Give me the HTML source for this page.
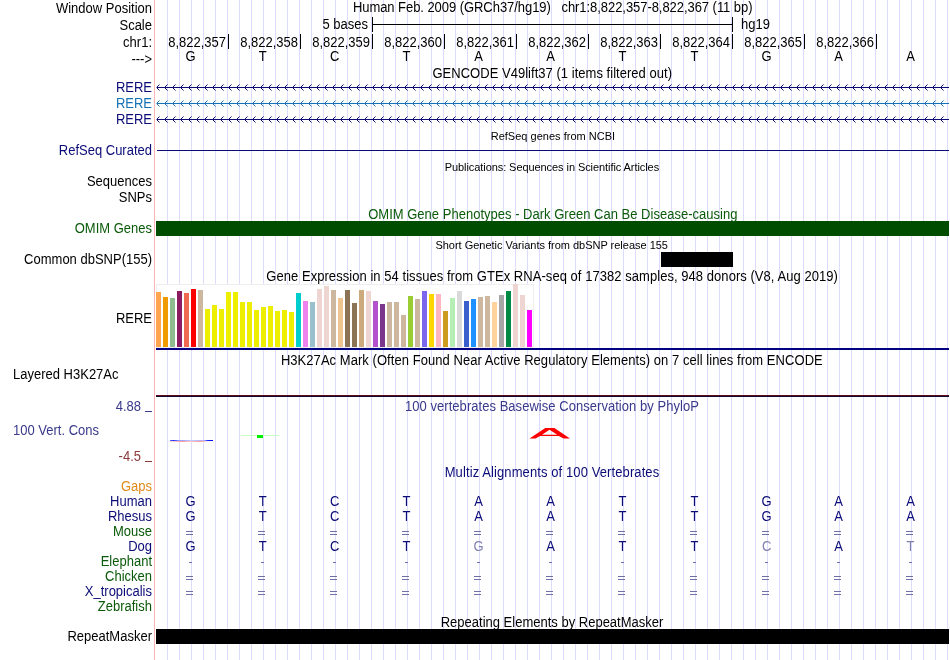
<!DOCTYPE html>
<html><head><meta charset="utf-8"><style>
html,body{margin:0;padding:0;background:#fff;}
#c{position:relative;width:950px;height:660px;overflow:hidden;background:#fff;}
svg{position:absolute;left:0;top:0;}
#tx{position:absolute;left:0;top:0;width:950px;height:660px;will-change:transform;}
.t{position:absolute;white-space:nowrap;font-family:"Liberation Sans",sans-serif;}
</style></head><body><div id="c">
<svg width="950" height="660" viewBox="0 0 950 660" shape-rendering="crispEdges">
<line x1="154.5" y1="0" x2="154.5" y2="660" stroke="#ffb4b4" stroke-width="1"/>
<line x1="167.5" y1="0" x2="167.5" y2="660" stroke="#dcdcff" stroke-width="1"/>
<line x1="179.5" y1="0" x2="179.5" y2="660" stroke="#dcdcff" stroke-width="1"/>
<line x1="191.5" y1="0" x2="191.5" y2="660" stroke="#dcdcff" stroke-width="1"/>
<line x1="203.5" y1="0" x2="203.5" y2="660" stroke="#dcdcff" stroke-width="1"/>
<line x1="215.5" y1="0" x2="215.5" y2="660" stroke="#dcdcff" stroke-width="1"/>
<line x1="227.5" y1="0" x2="227.5" y2="660" stroke="#dcdcff" stroke-width="1"/>
<line x1="239.5" y1="0" x2="239.5" y2="660" stroke="#dcdcff" stroke-width="1"/>
<line x1="251.5" y1="0" x2="251.5" y2="660" stroke="#dcdcff" stroke-width="1"/>
<line x1="263.5" y1="0" x2="263.5" y2="660" stroke="#dcdcff" stroke-width="1"/>
<line x1="275.5" y1="0" x2="275.5" y2="660" stroke="#dcdcff" stroke-width="1"/>
<line x1="287.5" y1="0" x2="287.5" y2="660" stroke="#dcdcff" stroke-width="1"/>
<line x1="299.5" y1="0" x2="299.5" y2="660" stroke="#dcdcff" stroke-width="1"/>
<line x1="311.5" y1="0" x2="311.5" y2="660" stroke="#dcdcff" stroke-width="1"/>
<line x1="323.5" y1="0" x2="323.5" y2="660" stroke="#dcdcff" stroke-width="1"/>
<line x1="335.5" y1="0" x2="335.5" y2="660" stroke="#dcdcff" stroke-width="1"/>
<line x1="347.5" y1="0" x2="347.5" y2="660" stroke="#dcdcff" stroke-width="1"/>
<line x1="359.5" y1="0" x2="359.5" y2="660" stroke="#dcdcff" stroke-width="1"/>
<line x1="371.5" y1="0" x2="371.5" y2="660" stroke="#dcdcff" stroke-width="1"/>
<line x1="383.5" y1="0" x2="383.5" y2="660" stroke="#dcdcff" stroke-width="1"/>
<line x1="395.5" y1="0" x2="395.5" y2="660" stroke="#dcdcff" stroke-width="1"/>
<line x1="407.5" y1="0" x2="407.5" y2="660" stroke="#dcdcff" stroke-width="1"/>
<line x1="419.5" y1="0" x2="419.5" y2="660" stroke="#dcdcff" stroke-width="1"/>
<line x1="431.5" y1="0" x2="431.5" y2="660" stroke="#dcdcff" stroke-width="1"/>
<line x1="443.5" y1="0" x2="443.5" y2="660" stroke="#dcdcff" stroke-width="1"/>
<line x1="455.5" y1="0" x2="455.5" y2="660" stroke="#dcdcff" stroke-width="1"/>
<line x1="467.5" y1="0" x2="467.5" y2="660" stroke="#dcdcff" stroke-width="1"/>
<line x1="479.5" y1="0" x2="479.5" y2="660" stroke="#dcdcff" stroke-width="1"/>
<line x1="491.5" y1="0" x2="491.5" y2="660" stroke="#dcdcff" stroke-width="1"/>
<line x1="503.5" y1="0" x2="503.5" y2="660" stroke="#dcdcff" stroke-width="1"/>
<line x1="515.5" y1="0" x2="515.5" y2="660" stroke="#dcdcff" stroke-width="1"/>
<line x1="527.5" y1="0" x2="527.5" y2="660" stroke="#dcdcff" stroke-width="1"/>
<line x1="539.5" y1="0" x2="539.5" y2="660" stroke="#dcdcff" stroke-width="1"/>
<line x1="551.5" y1="0" x2="551.5" y2="660" stroke="#dcdcff" stroke-width="1"/>
<line x1="563.5" y1="0" x2="563.5" y2="660" stroke="#dcdcff" stroke-width="1"/>
<line x1="575.5" y1="0" x2="575.5" y2="660" stroke="#dcdcff" stroke-width="1"/>
<line x1="587.5" y1="0" x2="587.5" y2="660" stroke="#dcdcff" stroke-width="1"/>
<line x1="599.5" y1="0" x2="599.5" y2="660" stroke="#dcdcff" stroke-width="1"/>
<line x1="611.5" y1="0" x2="611.5" y2="660" stroke="#dcdcff" stroke-width="1"/>
<line x1="623.5" y1="0" x2="623.5" y2="660" stroke="#dcdcff" stroke-width="1"/>
<line x1="635.5" y1="0" x2="635.5" y2="660" stroke="#dcdcff" stroke-width="1"/>
<line x1="647.5" y1="0" x2="647.5" y2="660" stroke="#dcdcff" stroke-width="1"/>
<line x1="659.5" y1="0" x2="659.5" y2="660" stroke="#dcdcff" stroke-width="1"/>
<line x1="671.5" y1="0" x2="671.5" y2="660" stroke="#dcdcff" stroke-width="1"/>
<line x1="683.5" y1="0" x2="683.5" y2="660" stroke="#dcdcff" stroke-width="1"/>
<line x1="695.5" y1="0" x2="695.5" y2="660" stroke="#dcdcff" stroke-width="1"/>
<line x1="707.5" y1="0" x2="707.5" y2="660" stroke="#dcdcff" stroke-width="1"/>
<line x1="719.5" y1="0" x2="719.5" y2="660" stroke="#dcdcff" stroke-width="1"/>
<line x1="731.5" y1="0" x2="731.5" y2="660" stroke="#dcdcff" stroke-width="1"/>
<line x1="743.5" y1="0" x2="743.5" y2="660" stroke="#dcdcff" stroke-width="1"/>
<line x1="755.5" y1="0" x2="755.5" y2="660" stroke="#dcdcff" stroke-width="1"/>
<line x1="767.5" y1="0" x2="767.5" y2="660" stroke="#dcdcff" stroke-width="1"/>
<line x1="779.5" y1="0" x2="779.5" y2="660" stroke="#dcdcff" stroke-width="1"/>
<line x1="791.5" y1="0" x2="791.5" y2="660" stroke="#dcdcff" stroke-width="1"/>
<line x1="803.5" y1="0" x2="803.5" y2="660" stroke="#dcdcff" stroke-width="1"/>
<line x1="815.5" y1="0" x2="815.5" y2="660" stroke="#dcdcff" stroke-width="1"/>
<line x1="827.5" y1="0" x2="827.5" y2="660" stroke="#dcdcff" stroke-width="1"/>
<line x1="839.5" y1="0" x2="839.5" y2="660" stroke="#dcdcff" stroke-width="1"/>
<line x1="851.5" y1="0" x2="851.5" y2="660" stroke="#dcdcff" stroke-width="1"/>
<line x1="863.5" y1="0" x2="863.5" y2="660" stroke="#dcdcff" stroke-width="1"/>
<line x1="875.5" y1="0" x2="875.5" y2="660" stroke="#dcdcff" stroke-width="1"/>
<line x1="887.5" y1="0" x2="887.5" y2="660" stroke="#dcdcff" stroke-width="1"/>
<line x1="899.5" y1="0" x2="899.5" y2="660" stroke="#dcdcff" stroke-width="1"/>
<line x1="911.5" y1="0" x2="911.5" y2="660" stroke="#dcdcff" stroke-width="1"/>
<line x1="923.5" y1="0" x2="923.5" y2="660" stroke="#dcdcff" stroke-width="1"/>
<line x1="935.5" y1="0" x2="935.5" y2="660" stroke="#dcdcff" stroke-width="1"/>
<line x1="947.5" y1="0" x2="947.5" y2="660" stroke="#dcdcff" stroke-width="1"/>
<rect x="145" y="411" width="7" height="1" fill="#3a3a8c"/>
<rect x="145" y="461" width="7" height="1" fill="#8c3a3a"/>
<line x1="372.5" y1="17" x2="372.5" y2="32" stroke="#000"/>
<line x1="732.5" y1="17" x2="732.5" y2="32" stroke="#000"/>
<line x1="372" y1="24.5" x2="733" y2="24.5" stroke="#000"/>
<line x1="228.5" y1="34" x2="228.5" y2="49" stroke="#000"/>
<line x1="300.5" y1="34" x2="300.5" y2="49" stroke="#000"/>
<line x1="372.5" y1="34" x2="372.5" y2="49" stroke="#000"/>
<line x1="444.5" y1="34" x2="444.5" y2="49" stroke="#000"/>
<line x1="516.5" y1="34" x2="516.5" y2="49" stroke="#000"/>
<line x1="588.5" y1="34" x2="588.5" y2="49" stroke="#000"/>
<line x1="660.5" y1="34" x2="660.5" y2="49" stroke="#000"/>
<line x1="732.5" y1="34" x2="732.5" y2="49" stroke="#000"/>
<line x1="804.5" y1="34" x2="804.5" y2="49" stroke="#000"/>
<line x1="876.5" y1="34" x2="876.5" y2="49" stroke="#000"/>
<pattern id="chev0" patternUnits="userSpaceOnUse" x="156" y="84" width="8" height="7"><rect x="0" y="3" width="1" height="1" fill="#0c0c78" fill-opacity="0.5"/><rect x="1" y="2" width="1" height="3" fill="#0c0c78"/><rect x="2" y="1" width="1" height="1" fill="#0c0c78"/><rect x="2" y="5" width="1" height="1" fill="#0c0c78"/><rect x="3" y="0" width="1" height="1" fill="#0c0c78" fill-opacity="0.5"/><rect x="3" y="6" width="1" height="1" fill="#0c0c78" fill-opacity="0.5"/></pattern>
<rect x="156" y="84" width="793" height="7" fill="url(#chev0)"/>
<rect x="157" y="87" width="792" height="1" fill="#0c0c78"/>
<pattern id="chev1" patternUnits="userSpaceOnUse" x="156" y="100" width="8" height="7"><rect x="0" y="3" width="1" height="1" fill="#1672b6" fill-opacity="0.5"/><rect x="1" y="2" width="1" height="3" fill="#1672b6"/><rect x="2" y="1" width="1" height="1" fill="#1672b6"/><rect x="2" y="5" width="1" height="1" fill="#1672b6"/><rect x="3" y="0" width="1" height="1" fill="#1672b6" fill-opacity="0.5"/><rect x="3" y="6" width="1" height="1" fill="#1672b6" fill-opacity="0.5"/></pattern>
<rect x="156" y="100" width="793" height="7" fill="url(#chev1)"/>
<rect x="157" y="103" width="792" height="1" fill="#1672b6"/>
<pattern id="chev2" patternUnits="userSpaceOnUse" x="156" y="116" width="8" height="7"><rect x="0" y="3" width="1" height="1" fill="#0c0c78" fill-opacity="0.5"/><rect x="1" y="2" width="1" height="3" fill="#0c0c78"/><rect x="2" y="1" width="1" height="1" fill="#0c0c78"/><rect x="2" y="5" width="1" height="1" fill="#0c0c78"/><rect x="3" y="0" width="1" height="1" fill="#0c0c78" fill-opacity="0.5"/><rect x="3" y="6" width="1" height="1" fill="#0c0c78" fill-opacity="0.5"/></pattern>
<rect x="156" y="116" width="793" height="7" fill="url(#chev2)"/>
<rect x="157" y="119" width="792" height="1" fill="#0c0c78"/>
<rect x="157" y="150" width="792" height="1" fill="#0c0c78"/>
<rect x="156" y="221" width="793" height="15" fill="#004d00"/>
<rect x="661" y="252" width="72" height="15" fill="#000"/>
<rect x="156.5" y="284.5" width="377" height="63" fill="#fff" stroke="#eeeeee"/>
<rect x="156" y="292" width="5" height="55" fill="#FFA54F"/>
<rect x="163" y="297" width="5" height="50" fill="#EE9A00"/>
<rect x="170" y="298" width="5" height="49" fill="#8FBC8F"/>
<rect x="177" y="291" width="5" height="56" fill="#8B1C62"/>
<rect x="184" y="293" width="5" height="54" fill="#EE6A50"/>
<rect x="191" y="289" width="5" height="58" fill="#FF0000"/>
<rect x="198" y="290" width="5" height="57" fill="#CDB79E"/>
<rect x="205" y="309" width="5" height="38" fill="#EEEE00"/>
<rect x="212" y="305" width="5" height="42" fill="#EEEE00"/>
<rect x="219" y="309" width="5" height="38" fill="#EEEE00"/>
<rect x="226" y="292" width="5" height="55" fill="#EEEE00"/>
<rect x="233" y="292" width="5" height="55" fill="#EEEE00"/>
<rect x="240" y="302" width="5" height="45" fill="#EEEE00"/>
<rect x="247" y="302" width="5" height="45" fill="#EEEE00"/>
<rect x="254" y="310" width="5" height="37" fill="#EEEE00"/>
<rect x="261" y="307" width="5" height="40" fill="#EEEE00"/>
<rect x="268" y="306" width="5" height="41" fill="#EEEE00"/>
<rect x="275" y="311" width="5" height="36" fill="#EEEE00"/>
<rect x="282" y="310" width="5" height="37" fill="#EEEE00"/>
<rect x="289" y="312" width="5" height="35" fill="#EEEE00"/>
<rect x="296" y="293" width="5" height="54" fill="#00CDCD"/>
<rect x="303" y="301" width="5" height="46" fill="#EE82EE"/>
<rect x="310" y="302" width="5" height="45" fill="#9AC0CD"/>
<rect x="317" y="289" width="5" height="58" fill="#EED5D2"/>
<rect x="324" y="286" width="5" height="61" fill="#EED5D2"/>
<rect x="331" y="290" width="5" height="57" fill="#CDB79E"/>
<rect x="338" y="298" width="5" height="49" fill="#EEC591"/>
<rect x="345" y="290" width="5" height="57" fill="#8B7355"/>
<rect x="352" y="303" width="5" height="44" fill="#8B7355"/>
<rect x="359" y="290" width="5" height="57" fill="#CDAA7D"/>
<rect x="366" y="291" width="5" height="56" fill="#EED5D2"/>
<rect x="373" y="301" width="5" height="46" fill="#B452CD"/>
<rect x="380" y="304" width="5" height="43" fill="#7A378B"/>
<rect x="387" y="302" width="5" height="45" fill="#CDB79E"/>
<rect x="394" y="302" width="5" height="45" fill="#CDB79E"/>
<rect x="401" y="315" width="5" height="32" fill="#CDB79E"/>
<rect x="408" y="296" width="5" height="51" fill="#9ACD32"/>
<rect x="415" y="299" width="5" height="48" fill="#CDB79E"/>
<rect x="422" y="291" width="5" height="56" fill="#7A67EE"/>
<rect x="429" y="294" width="5" height="53" fill="#FFD700"/>
<rect x="436" y="294" width="5" height="53" fill="#FFB6C1"/>
<rect x="443" y="311" width="5" height="36" fill="#CD9B1D"/>
<rect x="450" y="298" width="5" height="49" fill="#B4EEB4"/>
<rect x="457" y="291" width="5" height="56" fill="#D9D9D9"/>
<rect x="464" y="301" width="5" height="46" fill="#3A5FCD"/>
<rect x="471" y="299" width="5" height="48" fill="#1E90FF"/>
<rect x="478" y="297" width="5" height="50" fill="#CDB79E"/>
<rect x="485" y="296" width="5" height="51" fill="#CDB79E"/>
<rect x="492" y="302" width="5" height="45" fill="#FFD39B"/>
<rect x="499" y="295" width="5" height="52" fill="#A6A6A6"/>
<rect x="506" y="291" width="5" height="56" fill="#008B45"/>
<rect x="513" y="284" width="5" height="63" fill="#EED5D2"/>
<rect x="520" y="295" width="5" height="52" fill="#EED5D2"/>
<rect x="527" y="310" width="5" height="37" fill="#FF00FF"/>
<rect x="156" y="348" width="793" height="2" fill="#000080"/>
<rect x="156" y="395" width="793" height="1" fill="#5c0c1c"/>
<rect x="156" y="396" width="793" height="1" fill="#120a2c"/>
<defs><linearGradient id="gb" x1="0" x2="1" y1="0" y2="0"><stop offset="0" stop-color="#6070ff"/><stop offset="0.08" stop-color="#2030ff"/><stop offset="0.2" stop-color="#9098ff"/><stop offset="0.5" stop-color="#c4c8ff"/><stop offset="0.8" stop-color="#a8b0ff"/><stop offset="0.88" stop-color="#1020ff"/><stop offset="1" stop-color="#0000ff"/></linearGradient><linearGradient id="gr" x1="0" x2="1" y1="0" y2="0"><stop offset="0" stop-color="#ffe8e8"/><stop offset="0.35" stop-color="#ff9a9a"/><stop offset="0.55" stop-color="#ffc8c8"/><stop offset="0.8" stop-color="#ff9a9a"/><stop offset="1" stop-color="#fff0f0"/></linearGradient></defs>
<rect x="170" y="440" width="43" height="1" fill="url(#gb)"/>
<rect x="169" y="441" width="39" height="1" fill="url(#gr)"/>
<rect x="241" y="435" width="38" height="1" fill="#c8ffc8"/>
<rect x="257" y="435" width="6" height="3" fill="#00ee00"/>
<path shape-rendering="geometricPrecision" fill-rule="evenodd" fill="#ff0000" d="M529.5,438.6 L545.3,428 L554.4,428 L570,438.6 L563.6,438.6 L558.8,435.9 L540,435.9 L535.5,438.6 Z M549.5,429.8 L542,434.8 L557.3,434.8 Z"/>
<rect x="186" y="531" width="7" height="1" fill="#7070a8"/>
<rect x="186" y="534" width="7" height="1" fill="#7070a8"/>
<rect x="186" y="576" width="7" height="1" fill="#7070a8"/>
<rect x="186" y="579" width="7" height="1" fill="#7070a8"/>
<rect x="186" y="591" width="7" height="1" fill="#7070a8"/>
<rect x="186" y="594" width="7" height="1" fill="#7070a8"/>
<rect x="189" y="562" width="3" height="1" fill="#7070a8"/>
<rect x="258" y="531" width="7" height="1" fill="#7070a8"/>
<rect x="258" y="534" width="7" height="1" fill="#7070a8"/>
<rect x="258" y="576" width="7" height="1" fill="#7070a8"/>
<rect x="258" y="579" width="7" height="1" fill="#7070a8"/>
<rect x="258" y="591" width="7" height="1" fill="#7070a8"/>
<rect x="258" y="594" width="7" height="1" fill="#7070a8"/>
<rect x="261" y="562" width="3" height="1" fill="#7070a8"/>
<rect x="330" y="531" width="7" height="1" fill="#7070a8"/>
<rect x="330" y="534" width="7" height="1" fill="#7070a8"/>
<rect x="330" y="576" width="7" height="1" fill="#7070a8"/>
<rect x="330" y="579" width="7" height="1" fill="#7070a8"/>
<rect x="330" y="591" width="7" height="1" fill="#7070a8"/>
<rect x="330" y="594" width="7" height="1" fill="#7070a8"/>
<rect x="333" y="562" width="3" height="1" fill="#7070a8"/>
<rect x="402" y="531" width="7" height="1" fill="#7070a8"/>
<rect x="402" y="534" width="7" height="1" fill="#7070a8"/>
<rect x="402" y="576" width="7" height="1" fill="#7070a8"/>
<rect x="402" y="579" width="7" height="1" fill="#7070a8"/>
<rect x="402" y="591" width="7" height="1" fill="#7070a8"/>
<rect x="402" y="594" width="7" height="1" fill="#7070a8"/>
<rect x="405" y="562" width="3" height="1" fill="#7070a8"/>
<rect x="474" y="531" width="7" height="1" fill="#7070a8"/>
<rect x="474" y="534" width="7" height="1" fill="#7070a8"/>
<rect x="474" y="576" width="7" height="1" fill="#7070a8"/>
<rect x="474" y="579" width="7" height="1" fill="#7070a8"/>
<rect x="474" y="591" width="7" height="1" fill="#7070a8"/>
<rect x="474" y="594" width="7" height="1" fill="#7070a8"/>
<rect x="477" y="562" width="3" height="1" fill="#7070a8"/>
<rect x="546" y="531" width="7" height="1" fill="#7070a8"/>
<rect x="546" y="534" width="7" height="1" fill="#7070a8"/>
<rect x="546" y="576" width="7" height="1" fill="#7070a8"/>
<rect x="546" y="579" width="7" height="1" fill="#7070a8"/>
<rect x="546" y="591" width="7" height="1" fill="#7070a8"/>
<rect x="546" y="594" width="7" height="1" fill="#7070a8"/>
<rect x="549" y="562" width="3" height="1" fill="#7070a8"/>
<rect x="618" y="531" width="7" height="1" fill="#7070a8"/>
<rect x="618" y="534" width="7" height="1" fill="#7070a8"/>
<rect x="618" y="576" width="7" height="1" fill="#7070a8"/>
<rect x="618" y="579" width="7" height="1" fill="#7070a8"/>
<rect x="618" y="591" width="7" height="1" fill="#7070a8"/>
<rect x="618" y="594" width="7" height="1" fill="#7070a8"/>
<rect x="621" y="562" width="3" height="1" fill="#7070a8"/>
<rect x="690" y="531" width="7" height="1" fill="#7070a8"/>
<rect x="690" y="534" width="7" height="1" fill="#7070a8"/>
<rect x="690" y="576" width="7" height="1" fill="#7070a8"/>
<rect x="690" y="579" width="7" height="1" fill="#7070a8"/>
<rect x="690" y="591" width="7" height="1" fill="#7070a8"/>
<rect x="690" y="594" width="7" height="1" fill="#7070a8"/>
<rect x="693" y="562" width="3" height="1" fill="#7070a8"/>
<rect x="762" y="531" width="7" height="1" fill="#7070a8"/>
<rect x="762" y="534" width="7" height="1" fill="#7070a8"/>
<rect x="762" y="576" width="7" height="1" fill="#7070a8"/>
<rect x="762" y="579" width="7" height="1" fill="#7070a8"/>
<rect x="762" y="591" width="7" height="1" fill="#7070a8"/>
<rect x="762" y="594" width="7" height="1" fill="#7070a8"/>
<rect x="765" y="562" width="3" height="1" fill="#7070a8"/>
<rect x="834" y="531" width="7" height="1" fill="#7070a8"/>
<rect x="834" y="534" width="7" height="1" fill="#7070a8"/>
<rect x="834" y="576" width="7" height="1" fill="#7070a8"/>
<rect x="834" y="579" width="7" height="1" fill="#7070a8"/>
<rect x="834" y="591" width="7" height="1" fill="#7070a8"/>
<rect x="834" y="594" width="7" height="1" fill="#7070a8"/>
<rect x="837" y="562" width="3" height="1" fill="#7070a8"/>
<rect x="906" y="531" width="7" height="1" fill="#7070a8"/>
<rect x="906" y="534" width="7" height="1" fill="#7070a8"/>
<rect x="906" y="576" width="7" height="1" fill="#7070a8"/>
<rect x="906" y="579" width="7" height="1" fill="#7070a8"/>
<rect x="906" y="591" width="7" height="1" fill="#7070a8"/>
<rect x="906" y="594" width="7" height="1" fill="#7070a8"/>
<rect x="909" y="562" width="3" height="1" fill="#7070a8"/>
<rect x="156" y="629" width="793" height="15" fill="#000"/>
</svg>
<div id="tx">
<div class="t" style="right:798px;text-align:right;top:2px;font-size:13px;line-height:13px;color:#000;transform:scaleY(1.1);transform-origin:0 11px;">Window Position</div>
<div class="t" style="right:798px;text-align:right;top:19px;font-size:13px;line-height:13px;color:#000;transform:scaleY(1.1);transform-origin:0 11px;">Scale</div>
<div class="t" style="right:798px;text-align:right;top:36px;font-size:13px;line-height:13px;color:#000;transform:scaleY(1.1);transform-origin:0 11px;">chr1:</div>
<div class="t" style="right:798px;text-align:right;top:53px;font-size:13px;line-height:13px;color:#000;transform:scaleY(1.1);transform-origin:0 11px;">---&gt;</div>
<div class="t" style="right:798px;text-align:right;top:81px;font-size:13px;line-height:13px;color:#0c0c78;transform:scaleY(1.1);transform-origin:0 11px;">RERE</div>
<div class="t" style="right:798px;text-align:right;top:97px;font-size:13px;line-height:13px;color:#1672b6;transform:scaleY(1.1);transform-origin:0 11px;">RERE</div>
<div class="t" style="right:798px;text-align:right;top:113px;font-size:13px;line-height:13px;color:#0c0c78;transform:scaleY(1.1);transform-origin:0 11px;">RERE</div>
<div class="t" style="right:798px;text-align:right;top:144px;font-size:13px;line-height:13px;color:#0c0c78;transform:scaleY(1.1);transform-origin:0 11px;">RefSeq Curated</div>
<div class="t" style="right:798px;text-align:right;top:175px;font-size:13px;line-height:13px;color:#000;transform:scaleY(1.1);transform-origin:0 11px;">Sequences</div>
<div class="t" style="right:798px;text-align:right;top:191px;font-size:13px;line-height:13px;color:#000;transform:scaleY(1.1);transform-origin:0 11px;">SNPs</div>
<div class="t" style="right:798px;text-align:right;top:222px;font-size:13px;line-height:13px;color:#0a5a0a;transform:scaleY(1.1);transform-origin:0 11px;">OMIM Genes</div>
<div class="t" style="right:798px;text-align:right;top:253px;font-size:13px;line-height:13px;color:#000;transform:scaleY(1.1);transform-origin:0 11px;">Common dbSNP(155)</div>
<div class="t" style="right:798px;text-align:right;top:312px;font-size:13px;line-height:13px;color:#000;transform:scaleY(1.1);transform-origin:0 11px;">RERE</div>
<div class="t" style="left:13px;top:368px;font-size:13px;line-height:13px;color:#000;transform:scaleY(1.1);transform-origin:0 11px;">Layered H3K27Ac</div>
<div class="t" style="right:809px;text-align:right;top:400px;font-size:13px;line-height:13px;color:#3a3a8c;transform:scaleY(1.1);transform-origin:0 11px;">4.88</div>
<div class="t" style="left:13px;top:424px;font-size:13px;line-height:13px;color:#3a3a8c;transform:scaleY(1.1);transform-origin:0 11px;">100 Vert. Cons</div>
<div class="t" style="right:809px;text-align:right;top:450px;font-size:13px;line-height:13px;color:#8c3a3a;transform:scaleY(1.1);transform-origin:0 11px;">-4.5</div>
<div class="t" style="right:798px;text-align:right;top:480px;font-size:13px;line-height:13px;color:#e08a1a;transform:scaleY(1.1);transform-origin:0 11px;">Gaps</div>
<div class="t" style="right:798px;text-align:right;top:495px;font-size:13px;line-height:13px;color:#0c0c78;transform:scaleY(1.1);transform-origin:0 11px;">Human</div>
<div class="t" style="right:798px;text-align:right;top:510px;font-size:13px;line-height:13px;color:#0c0c78;transform:scaleY(1.1);transform-origin:0 11px;">Rhesus</div>
<div class="t" style="right:798px;text-align:right;top:525px;font-size:13px;line-height:13px;color:#0a5a0a;transform:scaleY(1.1);transform-origin:0 11px;">Mouse</div>
<div class="t" style="right:798px;text-align:right;top:540px;font-size:13px;line-height:13px;color:#0c0c78;transform:scaleY(1.1);transform-origin:0 11px;">Dog</div>
<div class="t" style="right:798px;text-align:right;top:555px;font-size:13px;line-height:13px;color:#0a5a0a;transform:scaleY(1.1);transform-origin:0 11px;">Elephant</div>
<div class="t" style="right:798px;text-align:right;top:570px;font-size:13px;line-height:13px;color:#0a5a0a;transform:scaleY(1.1);transform-origin:0 11px;">Chicken</div>
<div class="t" style="right:798px;text-align:right;top:585px;font-size:13px;line-height:13px;color:#0c0c78;transform:scaleY(1.1);transform-origin:0 11px;">X_tropicalis</div>
<div class="t" style="right:798px;text-align:right;top:600px;font-size:13px;line-height:13px;color:#0a5a0a;transform:scaleY(1.1);transform-origin:0 11px;">Zebrafish</div>
<div class="t" style="right:798px;text-align:right;top:630px;font-size:13px;line-height:13px;color:#000;transform:scaleY(1.1);transform-origin:0 11px;">RepeatMasker</div>
<div class="t" style="left:352.9px;top:1px;font-size:13px;line-height:13px;color:#000;letter-spacing:-0.054px;transform:scaleY(1.1);transform-origin:0 11px;">Human Feb. 2009 (GRCh37/hg19)&nbsp;&nbsp;&nbsp;chr1:8,822,357-8,822,367 (11 bp)</div>
<div class="t" style="right:582px;text-align:right;top:18px;font-size:13px;line-height:13px;color:#000;transform:scaleY(1.1);transform-origin:0 11px;">5 bases</div>
<div class="t" style="left:741px;top:18px;font-size:13px;line-height:13px;color:#000;transform:scaleY(1.1);transform-origin:0 11px;">hg19</div>
<div class="t" style="right:724px;text-align:right;top:36px;font-size:13px;line-height:13px;color:#000;transform:scaleY(1.1);transform-origin:0 11px;">8,822,357</div>
<div class="t" style="left:-209.4px;width:800px;text-align:center;top:50px;font-size:13px;line-height:13px;color:#000;transform:scaleY(1.1);transform-origin:0 11px;">G</div>
<div class="t" style="right:652px;text-align:right;top:36px;font-size:13px;line-height:13px;color:#000;transform:scaleY(1.1);transform-origin:0 11px;">8,822,358</div>
<div class="t" style="left:-137.39999999999998px;width:800px;text-align:center;top:50px;font-size:13px;line-height:13px;color:#000;transform:scaleY(1.1);transform-origin:0 11px;">T</div>
<div class="t" style="right:580px;text-align:right;top:36px;font-size:13px;line-height:13px;color:#000;transform:scaleY(1.1);transform-origin:0 11px;">8,822,359</div>
<div class="t" style="left:-65.39999999999998px;width:800px;text-align:center;top:50px;font-size:13px;line-height:13px;color:#000;transform:scaleY(1.1);transform-origin:0 11px;">C</div>
<div class="t" style="right:508px;text-align:right;top:36px;font-size:13px;line-height:13px;color:#000;transform:scaleY(1.1);transform-origin:0 11px;">8,822,360</div>
<div class="t" style="left:6.600000000000023px;width:800px;text-align:center;top:50px;font-size:13px;line-height:13px;color:#000;transform:scaleY(1.1);transform-origin:0 11px;">T</div>
<div class="t" style="right:436px;text-align:right;top:36px;font-size:13px;line-height:13px;color:#000;transform:scaleY(1.1);transform-origin:0 11px;">8,822,361</div>
<div class="t" style="left:78.60000000000002px;width:800px;text-align:center;top:50px;font-size:13px;line-height:13px;color:#000;transform:scaleY(1.1);transform-origin:0 11px;">A</div>
<div class="t" style="right:364px;text-align:right;top:36px;font-size:13px;line-height:13px;color:#000;transform:scaleY(1.1);transform-origin:0 11px;">8,822,362</div>
<div class="t" style="left:150.60000000000002px;width:800px;text-align:center;top:50px;font-size:13px;line-height:13px;color:#000;transform:scaleY(1.1);transform-origin:0 11px;">A</div>
<div class="t" style="right:292px;text-align:right;top:36px;font-size:13px;line-height:13px;color:#000;transform:scaleY(1.1);transform-origin:0 11px;">8,822,363</div>
<div class="t" style="left:222.60000000000002px;width:800px;text-align:center;top:50px;font-size:13px;line-height:13px;color:#000;transform:scaleY(1.1);transform-origin:0 11px;">T</div>
<div class="t" style="right:220px;text-align:right;top:36px;font-size:13px;line-height:13px;color:#000;transform:scaleY(1.1);transform-origin:0 11px;">8,822,364</div>
<div class="t" style="left:294.6px;width:800px;text-align:center;top:50px;font-size:13px;line-height:13px;color:#000;transform:scaleY(1.1);transform-origin:0 11px;">T</div>
<div class="t" style="right:148px;text-align:right;top:36px;font-size:13px;line-height:13px;color:#000;transform:scaleY(1.1);transform-origin:0 11px;">8,822,365</div>
<div class="t" style="left:366.6px;width:800px;text-align:center;top:50px;font-size:13px;line-height:13px;color:#000;transform:scaleY(1.1);transform-origin:0 11px;">G</div>
<div class="t" style="right:76px;text-align:right;top:36px;font-size:13px;line-height:13px;color:#000;transform:scaleY(1.1);transform-origin:0 11px;">8,822,366</div>
<div class="t" style="left:438.6px;width:800px;text-align:center;top:50px;font-size:13px;line-height:13px;color:#000;transform:scaleY(1.1);transform-origin:0 11px;">A</div>
<div class="t" style="left:510.6px;width:800px;text-align:center;top:50px;font-size:13px;line-height:13px;color:#000;transform:scaleY(1.1);transform-origin:0 11px;">A</div>
<div class="t" style="left:432.4px;top:67px;font-size:13px;line-height:13px;color:#000;letter-spacing:0.0308px;transform:scaleY(1.1);transform-origin:0 11px;">GENCODE V49lift37 (1 items filtered out)</div>
<div class="t" style="left:490.7px;top:131px;font-size:11px;line-height:11px;color:#000;letter-spacing:0.0143px;">RefSeq genes from NCBI</div>
<div class="t" style="left:444.7px;top:162px;font-size:11px;line-height:11px;color:#000;letter-spacing:-0.0711px;">Publications: Sequences in Scientific Articles</div>
<div class="t" style="left:368.2px;top:208px;font-size:13px;line-height:13px;color:#0a5a0a;letter-spacing:0.0127px;transform:scaleY(1.1);transform-origin:0 11px;">OMIM Gene Phenotypes - Dark Green Can Be Disease-causing</div>
<div class="t" style="left:435.4px;top:240px;font-size:11px;line-height:11px;color:#000;letter-spacing:-0.0136px;">Short Genetic Variants from dbSNP release 155</div>
<div class="t" style="left:266.3px;top:270px;font-size:13px;line-height:13px;color:#000;letter-spacing:0.0478px;transform:scaleY(1.1);transform-origin:0 11px;">Gene Expression in 54 tissues from GTEx RNA-seq of 17382 samples, 948 donors (V8, Aug 2019)</div>
<div class="t" style="left:280.9px;top:354px;font-size:13px;line-height:13px;color:#000;letter-spacing:0.0506px;transform:scaleY(1.1);transform-origin:0 11px;">H3K27Ac Mark (Often Found Near Active Regulatory Elements) on 7 cell lines from ENCODE</div>
<div class="t" style="left:405.05px;top:400px;font-size:13px;line-height:13px;color:#3a3a8c;letter-spacing:0.0402px;transform:scaleY(1.1);transform-origin:0 11px;">100 vertebrates Basewise Conservation by PhyloP</div>
<div class="t" style="left:444.7px;top:466px;font-size:13px;line-height:13px;color:#0c0c78;letter-spacing:0.1px;transform:scaleY(1.1);transform-origin:0 11px;">Multiz Alignments of 100 Vertebrates</div>
<div class="t" style="left:-209.4px;width:800px;text-align:center;top:495px;font-size:13px;line-height:13px;color:#0c0c78;transform:scaleY(1.1);transform-origin:0 11px;">G</div>
<div class="t" style="left:-209.4px;width:800px;text-align:center;top:510px;font-size:13px;line-height:13px;color:#0c0c78;transform:scaleY(1.1);transform-origin:0 11px;">G</div>
<div class="t" style="left:-209.4px;width:800px;text-align:center;top:540px;font-size:13px;line-height:13px;color:#0c0c78;transform:scaleY(1.1);transform-origin:0 11px;">G</div>
<div class="t" style="left:-137.39999999999998px;width:800px;text-align:center;top:495px;font-size:13px;line-height:13px;color:#0c0c78;transform:scaleY(1.1);transform-origin:0 11px;">T</div>
<div class="t" style="left:-137.39999999999998px;width:800px;text-align:center;top:510px;font-size:13px;line-height:13px;color:#0c0c78;transform:scaleY(1.1);transform-origin:0 11px;">T</div>
<div class="t" style="left:-137.39999999999998px;width:800px;text-align:center;top:540px;font-size:13px;line-height:13px;color:#0c0c78;transform:scaleY(1.1);transform-origin:0 11px;">T</div>
<div class="t" style="left:-65.39999999999998px;width:800px;text-align:center;top:495px;font-size:13px;line-height:13px;color:#0c0c78;transform:scaleY(1.1);transform-origin:0 11px;">C</div>
<div class="t" style="left:-65.39999999999998px;width:800px;text-align:center;top:510px;font-size:13px;line-height:13px;color:#0c0c78;transform:scaleY(1.1);transform-origin:0 11px;">C</div>
<div class="t" style="left:-65.39999999999998px;width:800px;text-align:center;top:540px;font-size:13px;line-height:13px;color:#0c0c78;transform:scaleY(1.1);transform-origin:0 11px;">C</div>
<div class="t" style="left:6.600000000000023px;width:800px;text-align:center;top:495px;font-size:13px;line-height:13px;color:#0c0c78;transform:scaleY(1.1);transform-origin:0 11px;">T</div>
<div class="t" style="left:6.600000000000023px;width:800px;text-align:center;top:510px;font-size:13px;line-height:13px;color:#0c0c78;transform:scaleY(1.1);transform-origin:0 11px;">T</div>
<div class="t" style="left:6.600000000000023px;width:800px;text-align:center;top:540px;font-size:13px;line-height:13px;color:#0c0c78;transform:scaleY(1.1);transform-origin:0 11px;">T</div>
<div class="t" style="left:78.60000000000002px;width:800px;text-align:center;top:495px;font-size:13px;line-height:13px;color:#0c0c78;transform:scaleY(1.1);transform-origin:0 11px;">A</div>
<div class="t" style="left:78.60000000000002px;width:800px;text-align:center;top:510px;font-size:13px;line-height:13px;color:#0c0c78;transform:scaleY(1.1);transform-origin:0 11px;">A</div>
<div class="t" style="left:78.60000000000002px;width:800px;text-align:center;top:540px;font-size:13px;line-height:13px;color:#8080b0;transform:scaleY(1.1);transform-origin:0 11px;">G</div>
<div class="t" style="left:150.60000000000002px;width:800px;text-align:center;top:495px;font-size:13px;line-height:13px;color:#0c0c78;transform:scaleY(1.1);transform-origin:0 11px;">A</div>
<div class="t" style="left:150.60000000000002px;width:800px;text-align:center;top:510px;font-size:13px;line-height:13px;color:#0c0c78;transform:scaleY(1.1);transform-origin:0 11px;">A</div>
<div class="t" style="left:150.60000000000002px;width:800px;text-align:center;top:540px;font-size:13px;line-height:13px;color:#0c0c78;transform:scaleY(1.1);transform-origin:0 11px;">A</div>
<div class="t" style="left:222.60000000000002px;width:800px;text-align:center;top:495px;font-size:13px;line-height:13px;color:#0c0c78;transform:scaleY(1.1);transform-origin:0 11px;">T</div>
<div class="t" style="left:222.60000000000002px;width:800px;text-align:center;top:510px;font-size:13px;line-height:13px;color:#0c0c78;transform:scaleY(1.1);transform-origin:0 11px;">T</div>
<div class="t" style="left:222.60000000000002px;width:800px;text-align:center;top:540px;font-size:13px;line-height:13px;color:#0c0c78;transform:scaleY(1.1);transform-origin:0 11px;">T</div>
<div class="t" style="left:294.6px;width:800px;text-align:center;top:495px;font-size:13px;line-height:13px;color:#0c0c78;transform:scaleY(1.1);transform-origin:0 11px;">T</div>
<div class="t" style="left:294.6px;width:800px;text-align:center;top:510px;font-size:13px;line-height:13px;color:#0c0c78;transform:scaleY(1.1);transform-origin:0 11px;">T</div>
<div class="t" style="left:294.6px;width:800px;text-align:center;top:540px;font-size:13px;line-height:13px;color:#0c0c78;transform:scaleY(1.1);transform-origin:0 11px;">T</div>
<div class="t" style="left:366.6px;width:800px;text-align:center;top:495px;font-size:13px;line-height:13px;color:#0c0c78;transform:scaleY(1.1);transform-origin:0 11px;">G</div>
<div class="t" style="left:366.6px;width:800px;text-align:center;top:510px;font-size:13px;line-height:13px;color:#0c0c78;transform:scaleY(1.1);transform-origin:0 11px;">G</div>
<div class="t" style="left:366.6px;width:800px;text-align:center;top:540px;font-size:13px;line-height:13px;color:#8080b0;transform:scaleY(1.1);transform-origin:0 11px;">C</div>
<div class="t" style="left:438.6px;width:800px;text-align:center;top:495px;font-size:13px;line-height:13px;color:#0c0c78;transform:scaleY(1.1);transform-origin:0 11px;">A</div>
<div class="t" style="left:438.6px;width:800px;text-align:center;top:510px;font-size:13px;line-height:13px;color:#0c0c78;transform:scaleY(1.1);transform-origin:0 11px;">A</div>
<div class="t" style="left:438.6px;width:800px;text-align:center;top:540px;font-size:13px;line-height:13px;color:#0c0c78;transform:scaleY(1.1);transform-origin:0 11px;">A</div>
<div class="t" style="left:510.6px;width:800px;text-align:center;top:495px;font-size:13px;line-height:13px;color:#0c0c78;transform:scaleY(1.1);transform-origin:0 11px;">A</div>
<div class="t" style="left:510.6px;width:800px;text-align:center;top:510px;font-size:13px;line-height:13px;color:#0c0c78;transform:scaleY(1.1);transform-origin:0 11px;">A</div>
<div class="t" style="left:510.6px;width:800px;text-align:center;top:540px;font-size:13px;line-height:13px;color:#8080b0;transform:scaleY(1.1);transform-origin:0 11px;">T</div>
<div class="t" style="left:440.7px;top:616px;font-size:13px;line-height:13px;color:#000;letter-spacing:0.003px;transform:scaleY(1.1);transform-origin:0 11px;">Repeating Elements by RepeatMasker</div>
</div></div></body></html>
